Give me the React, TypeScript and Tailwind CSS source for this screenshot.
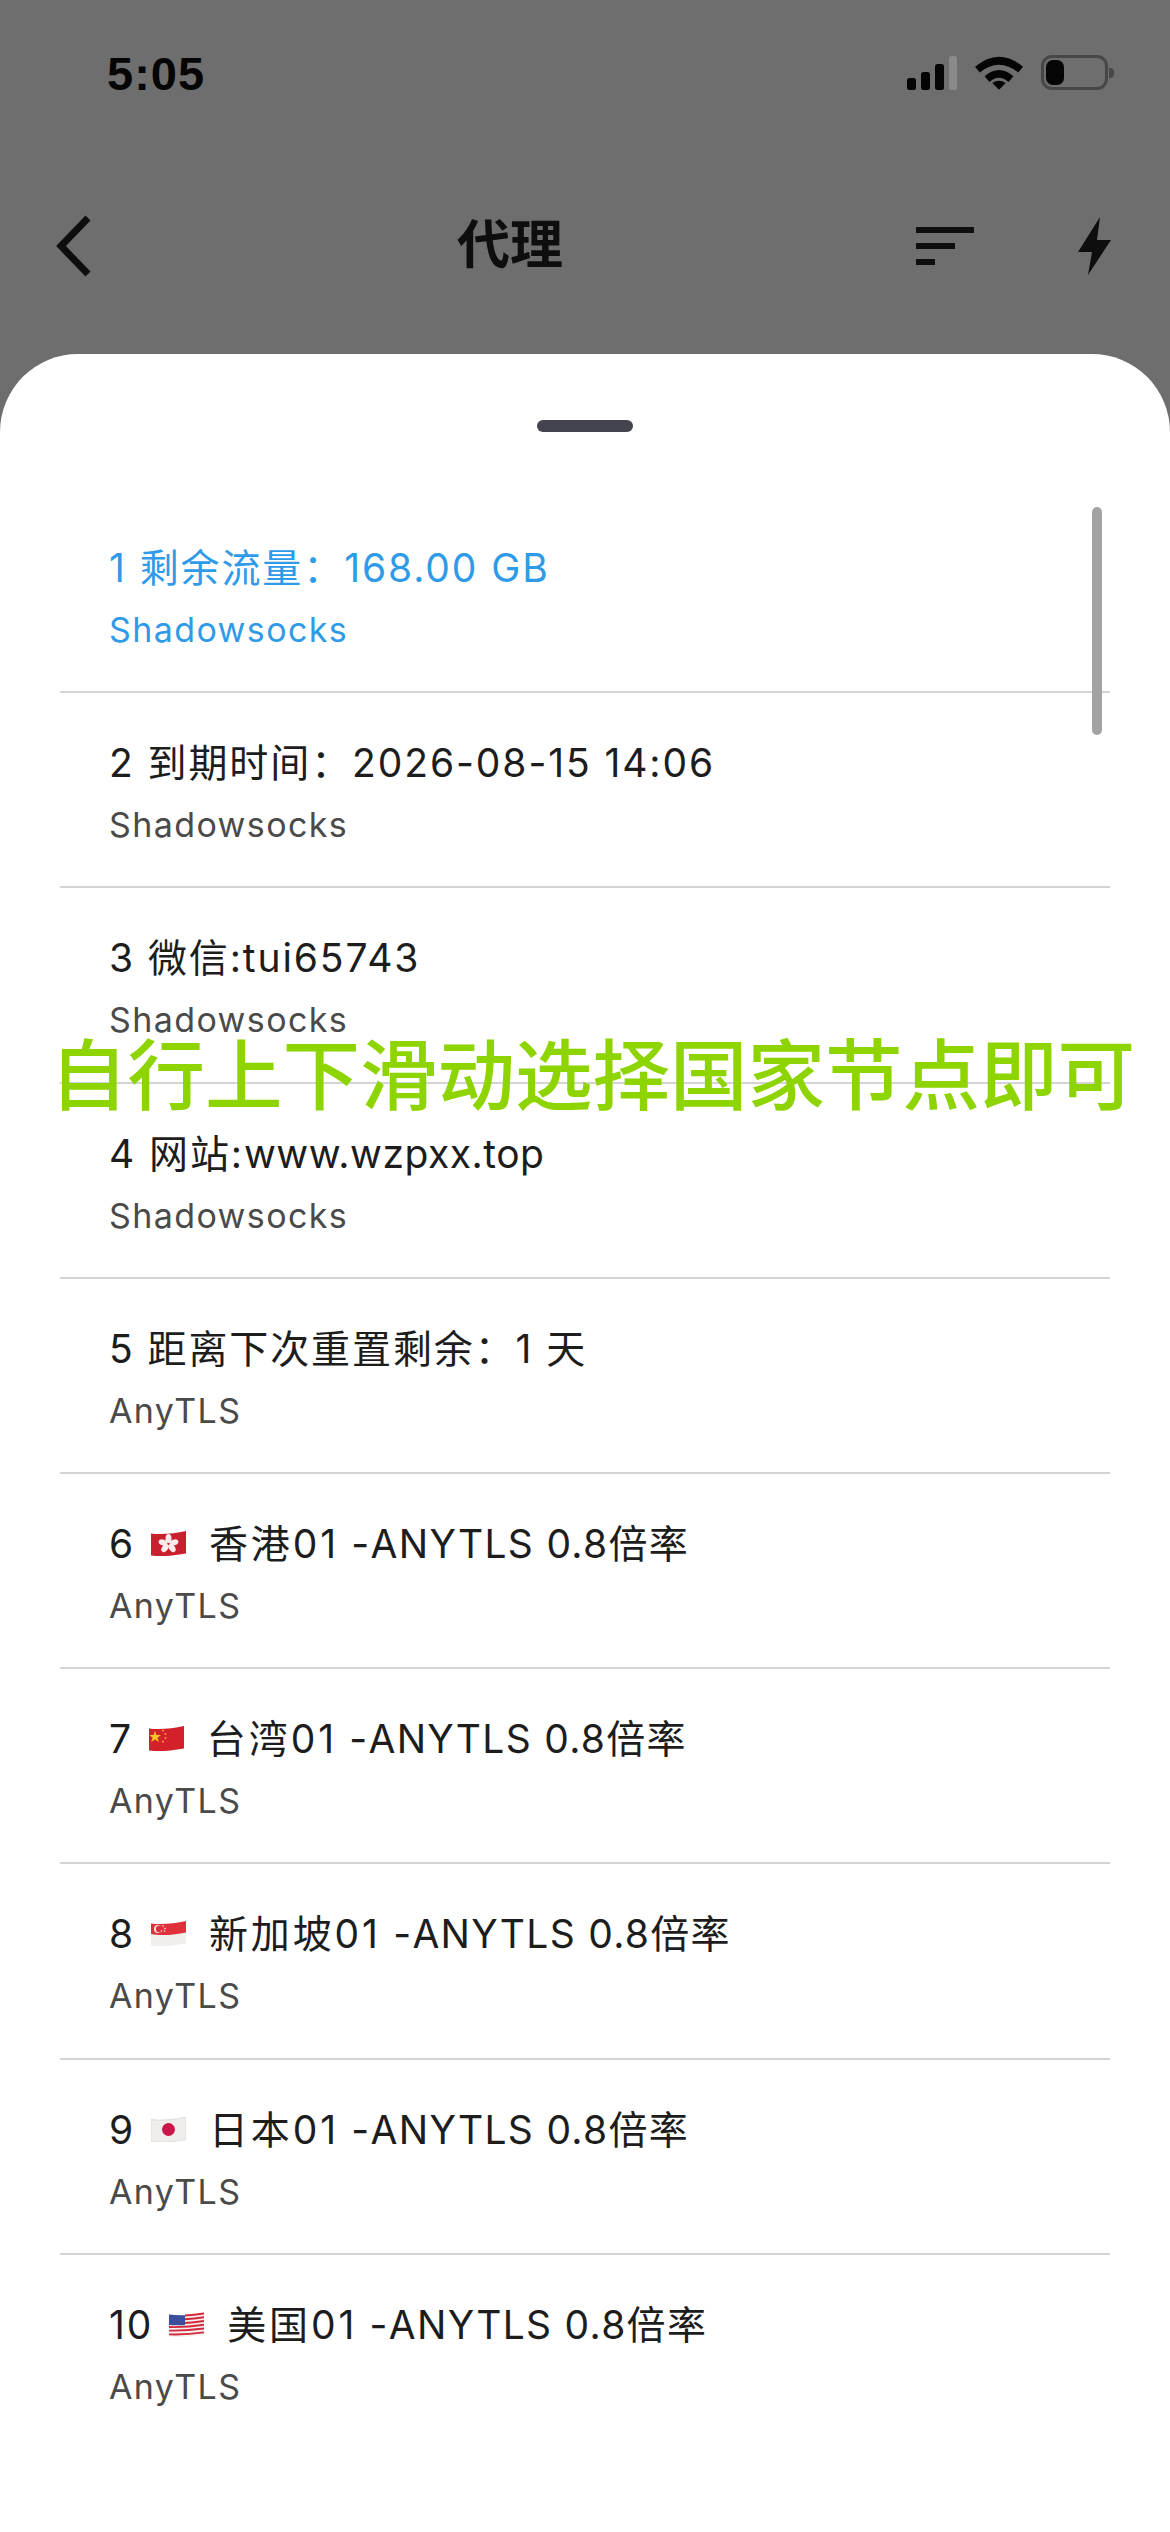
import React from "react";

const sans = "font-['Inter','Noto_Sans_CJK_SC',sans-serif]";
const flagBox = "inline-block w-[35px] h-[25px] align-[2px] ml-[3px] mr-[23px]";
const wave = "M0 2.5 C10 4 24 2.5 35 0 V22.5 C24 24.5 10 26 0 24.5 Z";

function Hk() {
  return (
    <svg viewBox="0 0 35 25" className={flagBox}>
      <path d={wave} fill="#c8202f" />
      <g fill="#fbeaea">
        <ellipse cx="17.5" cy="7.5" rx="3" ry="4.5" />
        <ellipse cx="12" cy="11.5" rx="3" ry="4.5" transform="rotate(-72 12 11.5)" />
        <ellipse cx="23" cy="11.5" rx="3" ry="4.5" transform="rotate(72 23 11.5)" />
        <ellipse cx="14" cy="17" rx="3" ry="4.5" transform="rotate(-144 14 17)" />
        <ellipse cx="21" cy="17" rx="3" ry="4.5" transform="rotate(144 21 17)" />
      </g>
    </svg>
  );
}
function Cn() {
  return (
    <svg viewBox="0 0 35 25" className={flagBox}>
      <path d={wave} fill="#d3202a" />
      <polygon points="6,5 7.5,9 12,9 8.5,11.8 10,16 6,13.4 2.2,16 3.6,11.8 0.5,9 4.5,9" fill="#f6c32c" />
      <g fill="#f2a33a">
        <circle cx="14" cy="4.5" r="1" />
        <circle cx="16.5" cy="8" r="1" />
        <circle cx="16.5" cy="12" r="1" />
        <circle cx="14" cy="15.5" r="1" />
      </g>
    </svg>
  );
}
function Sg() {
  return (
    <svg viewBox="0 0 35 25" className={flagBox}>
      <path d={wave} fill="#f1efec" />
      <path d="M0 2.5 C10 4 24 2.5 35 0 V11.5 C24 14 10 15 0 13 Z" fill="#e0303c" />
      <circle cx="7" cy="8" r="4" fill="#f6e6e6" />
      <circle cx="8.5" cy="8" r="3.6" fill="#e0303c" />
      <g fill="#f6e6e6">
        <circle cx="12" cy="5" r="0.8" />
        <circle cx="14" cy="7.5" r="0.8" />
        <circle cx="10.5" cy="10" r="0.8" />
        <circle cx="13.5" cy="10" r="0.8" />
      </g>
    </svg>
  );
}
function Jp() {
  return (
    <svg viewBox="0 0 35 25" className={flagBox}>
      <path d={wave} fill="#efeeec" stroke="#d9d7d4" strokeWidth="0.8" />
      <circle cx="17.5" cy="12.5" r="6.5" fill="#c9174a" />
    </svg>
  );
}
function Us() {
  return (
    <svg viewBox="0 0 35 25" className={flagBox}>
      <path d={wave} fill="#f3f0ee" />
      <g stroke="#d4283c" strokeWidth="1.9" fill="none">
        <path d="M16 3.5 Q25 3 35 1.5" />
        <path d="M16 7.3 Q25 7 35 5.3" />
        <path d="M16 11 Q25 10.6 35 9" />
        <path d="M0 15 Q17 15.5 35 12.8" />
        <path d="M0 18.6 Q17 19 35 16.5" />
        <path d="M0 22.4 Q17 23 35 20.4" />
      </g>
      <path d="M0 2.5 Q8 3.6 16 3.2 V13 Q8 13.6 0 13 Z" fill="#3b4f9e" />
    </svg>
  );
}

function Node({ name }: { name: string }) {
  return (
    <>
      <span className="tracking-[2.9px]">{name}</span>
      <span className="tracking-[1.3px]"> -ANYTLS 0.8倍率</span>
    </>
  );
}

const rows: { n: string; flag?: React.ReactNode; t: React.ReactNode; s: string }[] = [
  { n: "1", t: "剩余流量：168.00 GB", s: "Shadowsocks" },
  { n: "2", t: "到期时间：2026-08-15 14:06", s: "Shadowsocks" },
  { n: "3", t: "微信:tui65743", s: "Shadowsocks" },
  { n: "4", t: <>网站:<span className="tracking-[0.5px]">www.wzpxx.top</span></>, s: "Shadowsocks" },
  { n: "5", t: "距离下次重置剩余：1 天", s: "AnyTLS" },
  { n: "6", flag: <Hk />, t: <Node name="香港01" />, s: "AnyTLS" },
  { n: "7", flag: <Cn />, t: <Node name="台湾01" />, s: "AnyTLS" },
  { n: "8", flag: <Sg />, t: <Node name="新加坡01" />, s: "AnyTLS" },
  { n: "9", flag: <Jp />, t: <Node name="日本01" />, s: "AnyTLS" },
  { n: "10", flag: <Us />, t: <Node name="美国01" />, s: "AnyTLS" },
];

export default function App() {
  return (
    <div className={`relative w-[1170px] h-[2532px] overflow-hidden bg-[#6e6e6e] ${sans}`}>
      {/* status bar */}
      <div className="h-[148px] flex items-start justify-between pt-[50px] pl-[107px] pr-[56px]">
        <span className="text-[47px] leading-[48px] font-semibold tracking-[1px] text-[#050505] font-['Liberation_Sans',sans-serif]">5:05</span>
        <div className="flex items-end pt-[5px]">
          <svg viewBox="0 0 52 35" className="w-[52px] h-[35px]">
            <rect x="0" y="23" width="9" height="12" rx="2.5" fill="#050505" />
            <rect x="14" y="17" width="9" height="18" rx="2.5" fill="#050505" />
            <rect x="28" y="9" width="9" height="26" rx="2.5" fill="#050505" />
            <rect x="42" y="1" width="8" height="34" rx="2.5" fill="#8a8a8a" />
          </svg>
          <svg viewBox="0 0 50 36" className="w-[48px] h-[35px] ml-[16px]">
            <path d="M0 12 Q25 -9 50 12 L45 18 Q25 2 5 18 Z" fill="#050505" />
            <path d="M10 22 Q25 9 40 22 L35 28 Q25 19 15 28 Z" fill="#050505" />
            <path d="M18 29 Q25 24 32 29 L25 36 Z" fill="#050505" />
          </svg>
          <div className="flex items-center ml-[18px]">
            <div className="w-[67px] h-[35px] rounded-[11px] border-[3px] border-[#474747] p-[2px]">
              <div className="w-[18px] h-full rounded-[7px] bg-[#050505]" />
            </div>
            <div className="w-[5px] h-[10px] ml-[1px] rounded-r-[4px] bg-[#474747]" />
          </div>
        </div>
      </div>

      {/* nav */}
      <div className="relative h-[206px] flex items-start justify-between pl-[54px] pr-[59px] pt-[67px]">
        <svg viewBox="0 0 38 62" className="w-[38px] h-[62px]">
          <path d="M34 3 L7 31 L34 59" fill="none" stroke="#0e0e0e" strokeWidth="7" />
        </svg>
        <span className="absolute left-[457px] top-[62px] text-[53px] leading-[70px] font-bold text-[#0e0e0e]">代理</span>
        <div className="flex items-start gap-[104px] pt-[2px]">
          <div className="flex flex-col gap-[10px] pt-[10px] w-[58px]">
            <div className="h-[6px] w-[58px] bg-[#0e0e0e]" />
            <div className="h-[6px] w-[39px] bg-[#0e0e0e]" />
            <div className="h-[6px] w-[19px] bg-[#0e0e0e]" />
          </div>
          <svg viewBox="0 0 33 58" className="w-[33px] h-[58px]">
            <path d="M22 0 L0 35 L14 35 L10 58 L33 23 L19 23 Z" fill="#0e0e0e" />
          </svg>
        </div>
      </div>

      {/* sheet */}
      <div className="relative h-[2178px] rounded-t-[78px] bg-white">
        <div className="pt-[66px] flex justify-center">
          <div className="h-[12px] w-[96px] rounded-[6px] bg-[#44444f]" />
        </div>
        <div className="mx-[60px] mt-[66px]">
          {rows.map((r, i) => (
            <div key={r.n} className="h-[195.2px] pl-[49px] pt-[43px] border-b-2 border-[#d4d4d4] last:border-b-0">
              <div className={`text-[39px] leading-[54px] tracking-[1.9px] whitespace-nowrap ${i === 0 ? "text-[#2f9be8]" : "text-[#1d1d1d]"}`}>
                {r.n} {r.flag}{r.t}
              </div>
              <div className={`mt-[10px] text-[34px] leading-[50px] tracking-[1.4px] ${i === 0 ? "text-[#2f9be8]" : "text-[#4a4a4a]"}`}>{r.s}</div>
            </div>
          ))}
        </div>
        {/* scrollbar */}
        <div className="absolute left-[1092px] top-[153px] w-[10px] h-[228px] rounded-[5px] bg-[#a3a3a3]" />
      </div>

      {/* overlay caption */}
      <div className="absolute left-[50px] top-[1021px] text-[77.5px] leading-[110px] font-medium whitespace-nowrap text-[#8ed400]">自行上下滑动选择国家节点即可</div>
    </div>
  );
}
